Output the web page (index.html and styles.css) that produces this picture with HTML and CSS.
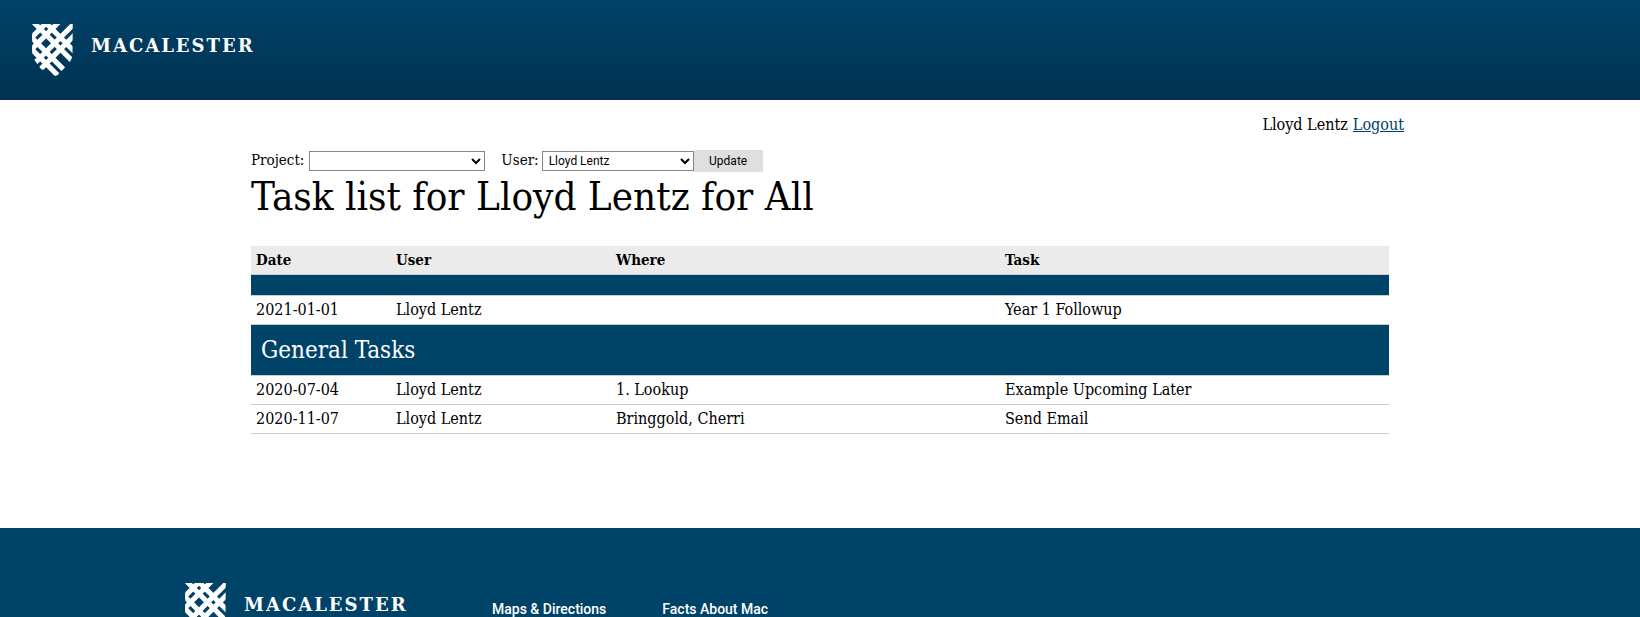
FILE: index.html
```html
<!DOCTYPE html>
<html lang="en">
<head>
<meta charset="utf-8">
<title>Task list</title>
<link rel="stylesheet" href="styles.css">
</head>
<body>
<svg class="defs" width="0" height="0" aria-hidden="true">
  <defs>
    <clipPath id="shield-clip"><path d="M0 0H123L122 98 113 117 77 154 70 157 62 154 27 136 8 110 0 94Z"/></clipPath>
    <symbol id="shield" viewBox="0 0 123 157">
      <g clip-path="url(#shield-clip)" stroke="#fff" stroke-width="15.4">
        <path d="M-20 -29.5L180 170.5M-20 -64.5L180 135.5M-20 22.5L180 222.5M-20 57.5L180 257.5"/>
        <path d="M-20 59.5L80 -40.5M-20 94.5L120 -45.5M-20 146L180 -54M-20 181.5L200 -38.5"/>
      </g>
    </symbol>
  </defs>
</svg>
<header class="site-header">
  <a class="brand" href="#"><svg class="brand-mark" aria-hidden="true"><use href="#shield"/></svg><span class="brand-name">MACALESTER</span></a>
</header>
<main class="content">
  <div class="account"><span>Lloyd Lentz</span><a href="#">Logout</a></div>
  <div class="panel">
    <form class="filters">
      <label for="project">Project:</label>
      <select id="project" class="project-select"><option></option></select>
      <label for="user" class="user-label">User:</label>
      <select id="user" class="user-select"><option>Lloyd Lentz</option></select><button type="button">Update</button>
    </form>
    <h1>Task list for Lloyd Lentz for All</h1>
    <table class="tasks">
      <colgroup><col class="col-date"><col class="col-user"><col class="col-where"><col></colgroup>
      <thead><tr><th>Date</th><th>User</th><th>Where</th><th>Task</th></tr></thead>
      <tbody>
        <tr><td class="group" colspan="4"></td></tr>
        <tr><td>2021-01-01</td><td>Lloyd Lentz</td><td></td><td>Year 1 Followup</td></tr>
        <tr><td class="group" colspan="4"><h2>General Tasks</h2></td></tr>
        <tr><td>2020-07-04</td><td>Lloyd Lentz</td><td>1. Lookup</td><td>Example Upcoming Later</td></tr>
        <tr><td>2020-11-07</td><td>Lloyd Lentz</td><td>Bringgold, Cherri</td><td>Send Email</td></tr>
      </tbody>
    </table>
  </div>
</main>
<footer class="site-footer">
  <div class="footer-inner">
    <a class="brand" href="#"><svg class="brand-mark" aria-hidden="true"><use href="#shield"/></svg><span class="brand-name">MACALESTER</span></a>
    <nav class="footer-links"><a href="#">Maps &amp; Directions</a><a href="#">Facts About Mac</a></nav>
  </div>
</footer>
</body>
</html>
```
FILE: styles.css
```css
* { box-sizing: border-box; }
body {
  margin: 0;
  height: 100vh;
  display: flex;
  flex-direction: column;
  overflow: hidden;
  background: #fff;
  color: #000;
  font-family: "DejaVu Serif Condensed", "DejaVu Serif", serif;
  font-size: 16px;
  line-height: 18px;
}
.defs { position: absolute; }
.site-header {
  flex: none;
  padding: 24px 32px;
  background: linear-gradient(#004369, #003150);
}
.brand {
  display: flex;
  gap: 18px;
  color: #fff;
  text-decoration: none;
}
.brand-mark { flex: none; width: 41px; height: 52px; }
.brand-name {
  padding-top: 11px;
  font-family: "DejaVu Serif", serif;
  font-size: 18px;
  line-height: 22px;
  font-weight: bold;
  letter-spacing: 2px;
}
.content {
  flex: none;
  width: 100%;
  max-width: 1170px;
  margin: 0 auto;
  padding: 16px 0 94px;
}
.account {
  display: flex;
  justify-content: flex-end;
  gap: 5px;
  padding-right: 1px;
}
.account a { color: #004369; }
.panel { padding: 16px 16px 0; }
.filters {
  display: flex;
  align-items: center;
  height: 22px;
  font-size: 15px;
}
.filters label { padding-bottom: 2px; }
.filters select, .filters button {
  border-radius: 0;
  font: 12px/16px Roboto, sans-serif;
  color: #000;
}
.filters select {
  height: 20px;
  padding: 0 0 0 2px;
  border: 1px solid #858585;
  background: #fff;
}
.project-select { width: 176px; margin-left: 5px; }
.user-select { width: 152px; margin-left: 3px; }
.user-label { margin-left: 16px; }
.filters button {
  width: 69px;
  height: 22px;
  padding: 0;
  border: 0;
  background: #dfdfdf;
}
h1 {
  margin: 0 0 26px;
  font-size: 40px;
  line-height: 48px;
  font-weight: normal;
}
.tasks {
  width: 100%;
  table-layout: fixed;
  border-collapse: separate;
  border-spacing: 0;
}
.col-date { width: 140px; }
.col-user { width: 220px; }
.col-where { width: 389px; }
.tasks th, .tasks td {
  padding: 5px;
  border-bottom: 1px solid #ccc;
  text-align: left;
}
.tasks th { background: #ebebeb; font-size: 15px; }
.tasks .group {
  padding: 10px;
  background: #004369;
  color: #fff;
}
h2 {
  margin: 0;
  font-size: 24px;
  line-height: 30px;
  font-weight: normal;
}
.site-footer {
  flex: 1 1 0;
  min-height: 0;
  overflow: hidden;
  background: #004369;
}
.footer-inner {
  display: flex;
  max-width: 1270px;
  margin: 0 auto;
  padding-top: 55px;
}
.footer-inner .brand { width: 307px; }
.footer-links {
  display: flex;
  gap: 56px;
  padding-top: 17px;
  font: 500 14px/18px Roboto, sans-serif;
}
.footer-links a { color: #fff; text-decoration: none; }
```
